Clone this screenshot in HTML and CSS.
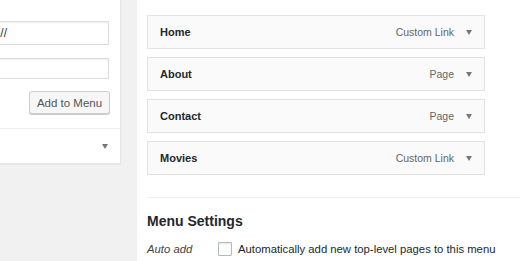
FILE: index.html
```html
<!DOCTYPE html>
<html lang="en">

<head>
    <meta name="viewport" content="width=device-width, initial-scale=1">
    <meta charset="utf-8">
    <link rel="stylesheet" href="styles.css">
</head>

<body>
    <div class="wrap">
        <div class="side">
            <div class="fields">
                <input class="url" type="text" value="http://">
                <input class="label" type="text">
                <div class="actions">
                    <button type="button">Add to Menu</button>
                </div>
            </div>
            <div class="section">
                <span class="arrow"></span>
            </div>
        </div>
        <div class="main">
            <ul class="menu">
                <li class="item"><span class="title">Home</span><span class="type">Custom Link</span><span class="arrow"></span></li>
                <li class="item"><span class="title">About</span><span class="type">Page</span><span class="arrow"></span></li>
                <li class="item"><span class="title">Contact</span><span class="type">Page</span><span class="arrow"></span></li>
                <li class="item"><span class="title">Movies</span><span class="type">Custom Link</span><span class="arrow"></span></li>
            </ul>
            <div class="settings">
                <h3>Menu Settings</h3>
                <div class="row">
                    <span class="name">Auto add pages</span>
                    <label class="check"><input type="checkbox"> Automatically add new top-level pages to this menu</label>
                </div>
            </div>
        </div>
    </div>
</body>

</html>
```

FILE: styles.css
```css
body {
    margin: 0;
    background: #f1f1f1;
    font-family: "Liberation Sans", Arial, sans-serif;
    color: #23282d;
    overflow: hidden;
}

.wrap {
    display: flex;
    gap: 16px;
    height: 261px;
}

.side {
    box-sizing: border-box;
    width: 151px;
    margin-left: -30px;
    align-self: flex-start;
    background: #fff;
    border-right: 1px solid #e5e5e5;
    border-bottom: 1px solid #e5e5e5;
    box-shadow: 0 1px 1px rgba(0, 0, 0, .04);
}

.fields {
    padding: 21px 11px 14px 0;
}

.fields input {
    display: block;
    box-sizing: border-box;
    width: 100%;
    margin: 0;
    padding: 0 6px;
    border: 1px solid #ddd;
    box-shadow: inset 0 1px 2px rgba(0, 0, 0, .07);
    font-family: inherit;
    font-size: 12px;
    color: #32373c;
    outline: none;
}

.fields .url {
    height: 24px;
}

.fields .label {
    height: 21px;
    margin-top: 13px;
}

.actions {
    display: flex;
    justify-content: flex-end;
    margin-top: 12px;
}

.actions button {
    box-sizing: border-box;
    width: 81px;
    height: 23px;
    margin-right: -1px;
    padding: 0;
    background: #f7f7f7;
    border: 1px solid #ccc;
    border-radius: 3px;
    box-shadow: 0 1px 0 #ccc;
    font-family: inherit;
    font-size: 11.5px;
    color: #555;
}

.section {
    display: flex;
    justify-content: flex-end;
    align-items: center;
    height: 34px;
    padding-right: 12px;
    border-top: 1px solid #eee;
}

.arrow {
    width: 0;
    height: 0;
    border-left: 3.5px solid transparent;
    border-right: 3.5px solid transparent;
    border-top: 5px solid #777;
}

.main {
    flex: 1;
    background: #fff;
    padding: 15px 0 0 10px;
}

.menu {
    list-style: none;
    margin: 0;
    padding: 0 0 22px 0;
    border-bottom: 1px solid #eee;
}

.item {
    box-sizing: border-box;
    display: flex;
    align-items: center;
    width: 338px;
    height: 34px;
    margin-bottom: 8px;
    padding: 0 12px 0 12px;
    background: #fafafa;
    border: 1px solid #e2e2e2;
}

.item:last-child {
    margin-bottom: 0;
}

.title {
    flex: 1;
    font-size: 11px;
    font-weight: bold;
}

.type {
    font-size: 10.5px;
    color: #666;
    margin-right: 12px;
}

.settings h3 {
    margin: 15px 0 0 0;
    font-size: 14px;
    font-weight: bold;
    line-height: 17px;
}

.row {
    display: flex;
    margin-top: 11px;
    font-size: 11.3px;
    line-height: 16px;
}

.name {
    width: 71px;
    font-style: italic;
    color: #444;
}

.check {
    display: flex;
    align-items: flex-start;
    gap: 6px;
    color: #23282d;
}

.check input {
    box-sizing: border-box;
    appearance: none;
    width: 14px;
    height: 14px;
    margin: 1px 0 0 0;
    border: 1px solid #b4b9be;
    border-radius: 1px;
    background: #fff;
    box-shadow: inset 0 1px 2px rgba(0, 0, 0, .1);
}
```
